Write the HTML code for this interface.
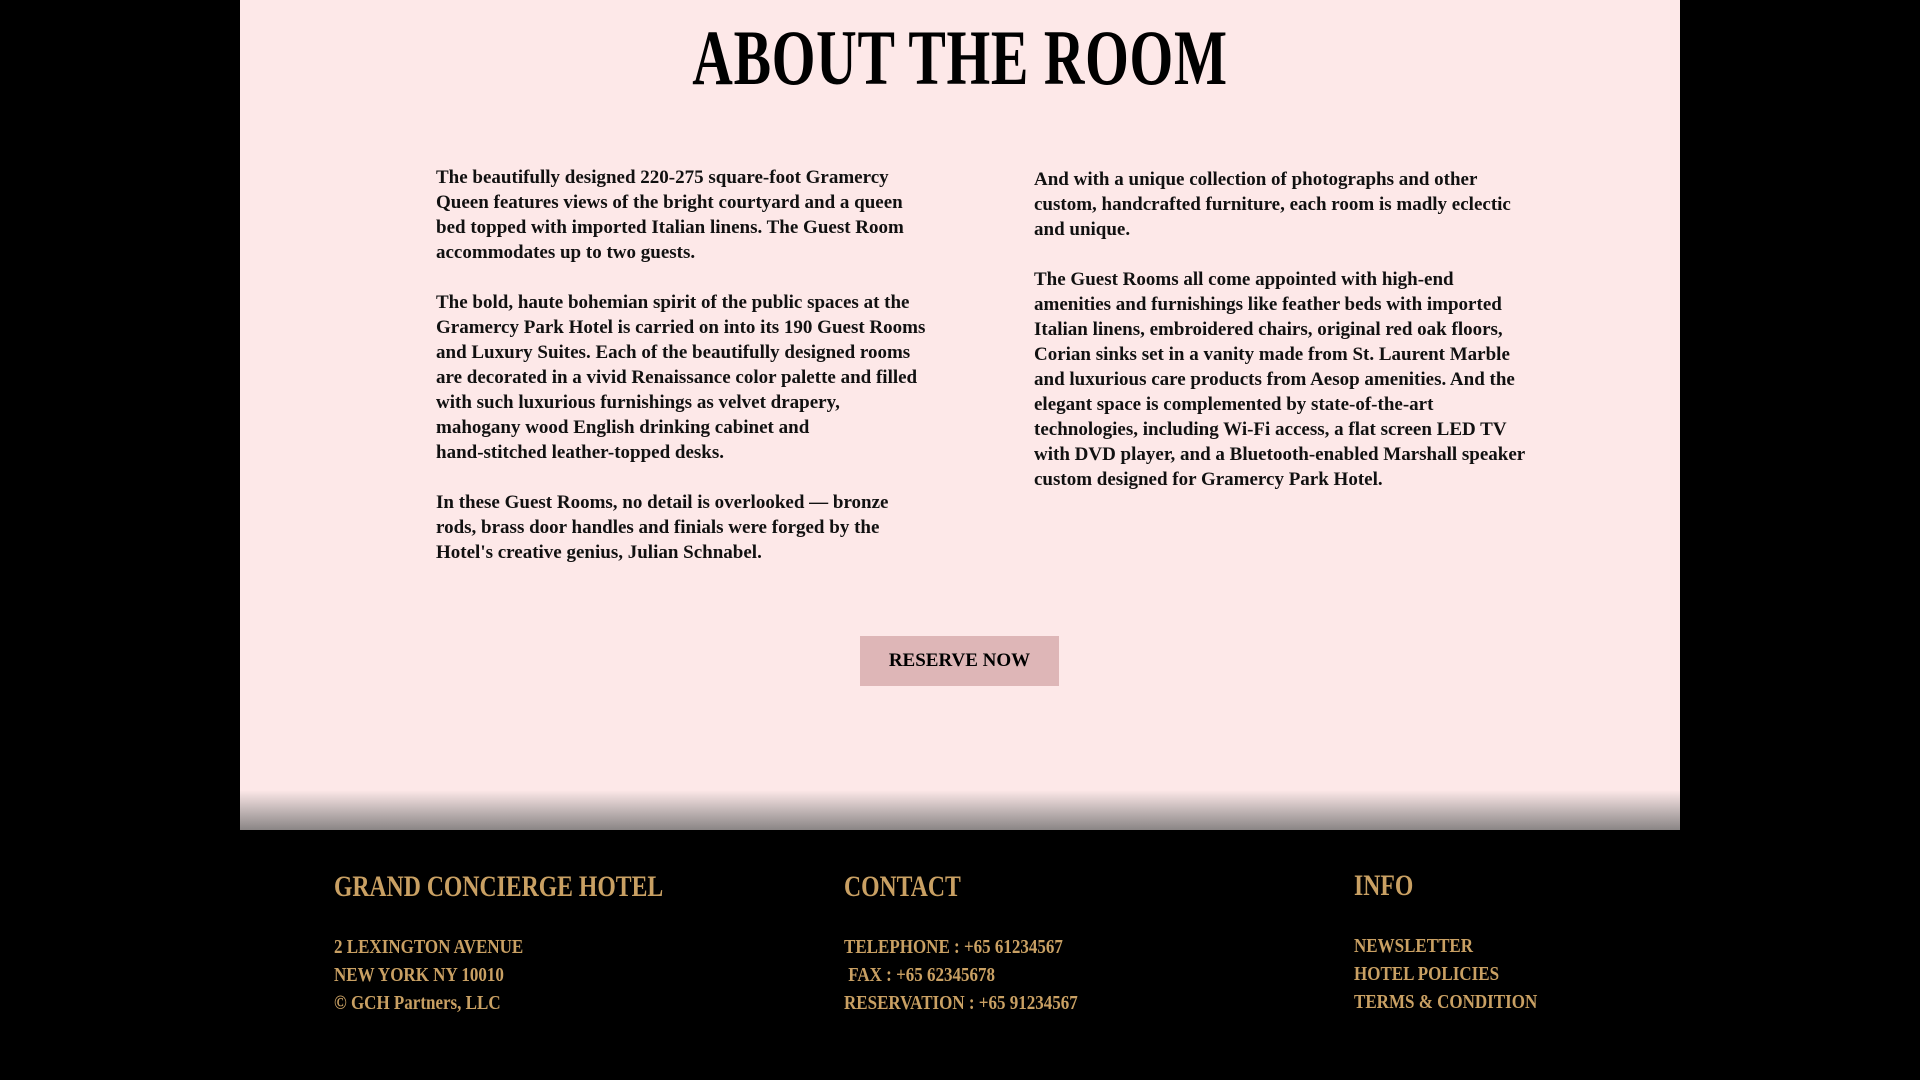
<!DOCTYPE html>
<html><head><meta charset="utf-8"><style>
*{margin:0;padding:0;box-sizing:border-box}
body{width:1920px;height:1080px;background:#000;position:relative;overflow:hidden;font-family:"Liberation Serif",serif;font-weight:bold}
.panel{position:absolute;left:240px;top:0;width:1440px;height:830px;background:linear-gradient(#fde8e8 0,#fde8e8 790px,#bdb2b2 812px,#8a8585 830px)}
h1{position:absolute;left:0;width:1920px;top:18px;text-align:center;font-size:78px;line-height:80px;transform:scaleX(0.72);letter-spacing:1px}
.col{position:absolute;font-size:19px;line-height:25px;color:#111;white-space:nowrap}
.col p{margin-bottom:25px}
.btn{position:absolute;left:860px;top:636px;width:199px;height:50px;background:#deb6b7;text-align:center;line-height:50px;font-size:19px}
.f{position:absolute;color:#c9a063;white-space:nowrap}
.f h2{font-size:30px;line-height:36px;transform:scaleX(0.79);transform-origin:left;margin-bottom:28px}
.f div{font-size:20px;line-height:28px;transform:scaleX(0.85);transform-origin:left}
</style></head><body>
<div class="panel"></div>
<h1>ABOUT THE ROOM</h1>
<div class="col" style="left:436px;top:165px">
<p>The beautifully designed 220-275 square-foot Gramercy<br>Queen features views of the bright courtyard and a queen<br>bed topped with imported Italian linens. The Guest Room<br>accommodates up to two guests.</p>
<p>The bold, haute bohemian spirit of the public spaces at the<br>Gramercy Park Hotel is carried on into its 190 Guest Rooms<br>and Luxury Suites. Each of the beautifully designed rooms<br>are decorated in a vivid Renaissance color palette and filled<br>with such luxurious furnishings as velvet drapery,<br>mahogany wood English drinking cabinet and<br>hand-stitched leather-topped desks.</p>
<p>In these Guest Rooms, no detail is overlooked — bronze<br>rods, brass door handles and finials were forged by the<br>Hotel's creative genius, Julian Schnabel.</p>
</div>
<div class="col" style="left:1034px;top:167px">
<p>And with a unique collection of photographs and other<br>custom, handcrafted furniture, each room is madly eclectic<br>and unique.</p>
<p>The Guest Rooms all come appointed with high-end<br>amenities and furnishings like feather beds with imported<br>Italian linens, embroidered chairs, original red oak floors,<br>Corian sinks set in a vanity made from St. Laurent Marble<br>and luxurious care products from Aesop amenities. And the<br>elegant space is complemented by state-of-the-art<br>technologies, including Wi-Fi access, a flat screen LED TV<br>with DVD player, and a Bluetooth-enabled Marshall speaker<br>custom designed for Gramercy Park Hotel.</p>
</div>
<div class="btn">RESERVE NOW</div>
<div class="f" style="left:334px;top:869px"><h2>GRAND CONCIERGE HOTEL</h2><div>2 LEXINGTON AVENUE</div><div>NEW YORK NY 10010</div><div>© GCH Partners, LLC</div></div>
<div class="f" style="left:844px;top:869px"><h2>CONTACT</h2><div>TELEPHONE : +65 61234567</div><div>&nbsp;FAX : +65 62345678</div><div>RESERVATION : +65 91234567</div></div>
<div class="f" style="left:1354px;top:868px"><h2>INFO</h2><div>NEWSLETTER</div><div>HOTEL POLICIES</div><div>TERMS &amp; CONDITION</div></div>
</body></html>
